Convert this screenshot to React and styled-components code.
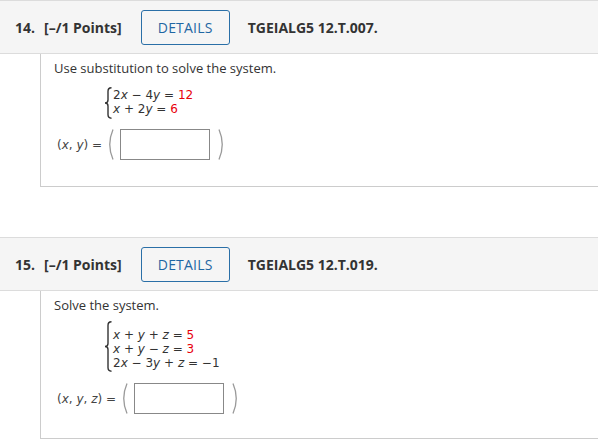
import React from "react";
import styled, { createGlobalStyle } from "styled-components";

const Global = createGlobalStyle`
  html, body { margin: 0; padding: 0; background: #fff; }
  body { font-family: "Open Sans", "Liberation Sans", sans-serif; color: #333; }
`;

const Page = styled.div`
  width: 598px;
  display: flex;
  flex-direction: column;
  gap: 50px;
`;

const Question = styled.section``;

const Header = styled.header`
  display: flex;
  align-items: center;
  height: 52px;
  padding-left: 15px;
  background: #f5f5f5;
  border-top: 1px solid #dcdcdc;
  border-bottom: 1px solid #dcdcdc;
  font-size: 14px;
  font-weight: 700;
  color: #333;
  white-space: nowrap;
`;

const Num = styled.span`
  margin-right: 9px;
`;

const Points = styled.span`
  margin-right: 19px;
`;

const DetailsButton = styled.button`
  font-family: inherit;
  font-size: 14px;
  font-weight: 400;
  letter-spacing: 0.2px;
  color: #1f66a3;
  background: transparent;
  border: 1px solid #2a6fa7;
  border-radius: 3px;
  width: 89px;
  height: 35px;
  padding: 0;
  margin-right: 18px;
`;

const Code = styled.span``;

const Body = styled.div`
  margin-left: 40px;
  border-left: 1px solid #cccccc;
  border-bottom: 1px solid #cccccc;
  padding: 5px 14px ${(p) => p.$pb}px 13px;
`;

const Prompt = styled.div`
  font-size: 13px;
  line-height: 18px;
  color: #333;
`;

const System = styled.div`
  display: flex;
  margin-top: ${(p) => p.$mt}px;
  margin-left: 50px;
`;

const Lines = styled.div`
  font-family: "DejaVu Sans", Verdana, sans-serif;
  font-size: 12px;
  line-height: 14px;
  color: #333;
  padding-top: ${(p) => p.$pt}px;
  padding-bottom: 2px;
  padding-left: 1px;
  white-space: pre;
`;

const Var = styled.i`
  font-style: italic;
`;

const Red = styled.span`
  color: #e8000b;
`;

const AnswerRow = styled.div`
  display: flex;
  align-items: center;
  margin-top: ${(p) => p.$mt}px;
  padding-left: 3px;
  font-family: "DejaVu Sans", Verdana, sans-serif;
  font-size: 12px;
  color: #444;
  white-space: pre;
`;

const ParenSvg = styled.svg`
  display: block;
  flex: none;
  margin-left: ${(p) => p.$ml}px;
`;

const AnswerBox = styled.div`
  width: 88px;
  height: 29px;
  border: 1px solid #888;
  background: #fff;
  margin-left: 6px;
`;

function Brace({ h }) {
  const m = h / 2;
  const d = `M7.5,0.8 C4.6,0.8 4,2 4,4.5 L4,${m - 3} C4,${m - 1} 3,${m} 1,${m} C3,${m} 4,${m + 1} 4,${m + 3} L4,${h - 4.5} C4,${h - 2} 4.6,${h - 0.8} 7.5,${h - 0.8}`;
  return (
    <svg width="8" height={h} viewBox={`0 0 8 ${h}`} style={{ display: "block", flex: "none" }}>
      <path d={d} fill="none" stroke="#333" strokeWidth="1.4" />
    </svg>
  );
}

function Paren({ right, ml }) {
  const d = right ? "M1,0.5 Q7.5,15.5 1,30.5" : "M6,0.5 Q-0.5,15.5 6,30.5";
  return (
    <ParenSvg $ml={ml} width="7" height="31" viewBox="0 0 7 31">
      <path d={d} fill="none" stroke="#9a9a9a" strokeWidth="1.3" />
    </ParenSvg>
  );
}

function QuestionHeader({ num, code }) {
  return (
    <Header>
      <Num>{num}.</Num>
      <Points>[–/1 Points]</Points>
      <DetailsButton>DETAILS</DetailsButton>
      <Code>{code}</Code>
    </Header>
  );
}

export default function App() {
  return (
    <>
      <Global />
      <Page>
        <Question>
          <QuestionHeader num="14" code="TGEIALG5 12.T.007." />
          <Body $pb={26}>
            <Prompt>Use substitution to solve the system.</Prompt>
            <System $mt={10}>
              <Brace h={32} />
              <Lines $pt={1}>
                <div>
                  2<Var>x</Var> − 4<Var>y</Var> = <Red>12</Red>
                </div>
                <div>
                  <Var>x</Var> + 2<Var>y</Var> = <Red>6</Red>
                </div>
              </Lines>
            </System>
            <AnswerRow $mt={10}>
              <span>
                (<Var>x</Var>, <Var>y</Var>) =
              </span>
              <Paren ml={5} />
              <AnswerBox />
              <Paren right ml={8} />
            </AnswerRow>
          </Body>
        </Question>
        <Question>
          <QuestionHeader num="15" code="TGEIALG5 12.T.019." />
          <Body $pb={24}>
            <Prompt>Solve the system.</Prompt>
            <System $mt={7}>
              <Brace h={51} />
              <Lines $pt={7}>
                <div>
                  <Var>x</Var> + <Var>y</Var> + <Var>z</Var> = <Red>5</Red>
                </div>
                <div>
                  <Var>x</Var> + <Var>y</Var> − <Var>z</Var> = <Red>3</Red>
                </div>
                <div>
                  2<Var>x</Var> − 3<Var>y</Var> + <Var>z</Var> = −1
                </div>
              </Lines>
            </System>
            <AnswerRow $mt={11}>
              <span>
                (<Var>x</Var>, <Var>y</Var>, <Var>z</Var>) =
              </span>
              <Paren ml={5} />
              <AnswerBox />
              <Paren right ml={8} />
            </AnswerRow>
          </Body>
        </Question>
      </Page>
    </>
  );
}
